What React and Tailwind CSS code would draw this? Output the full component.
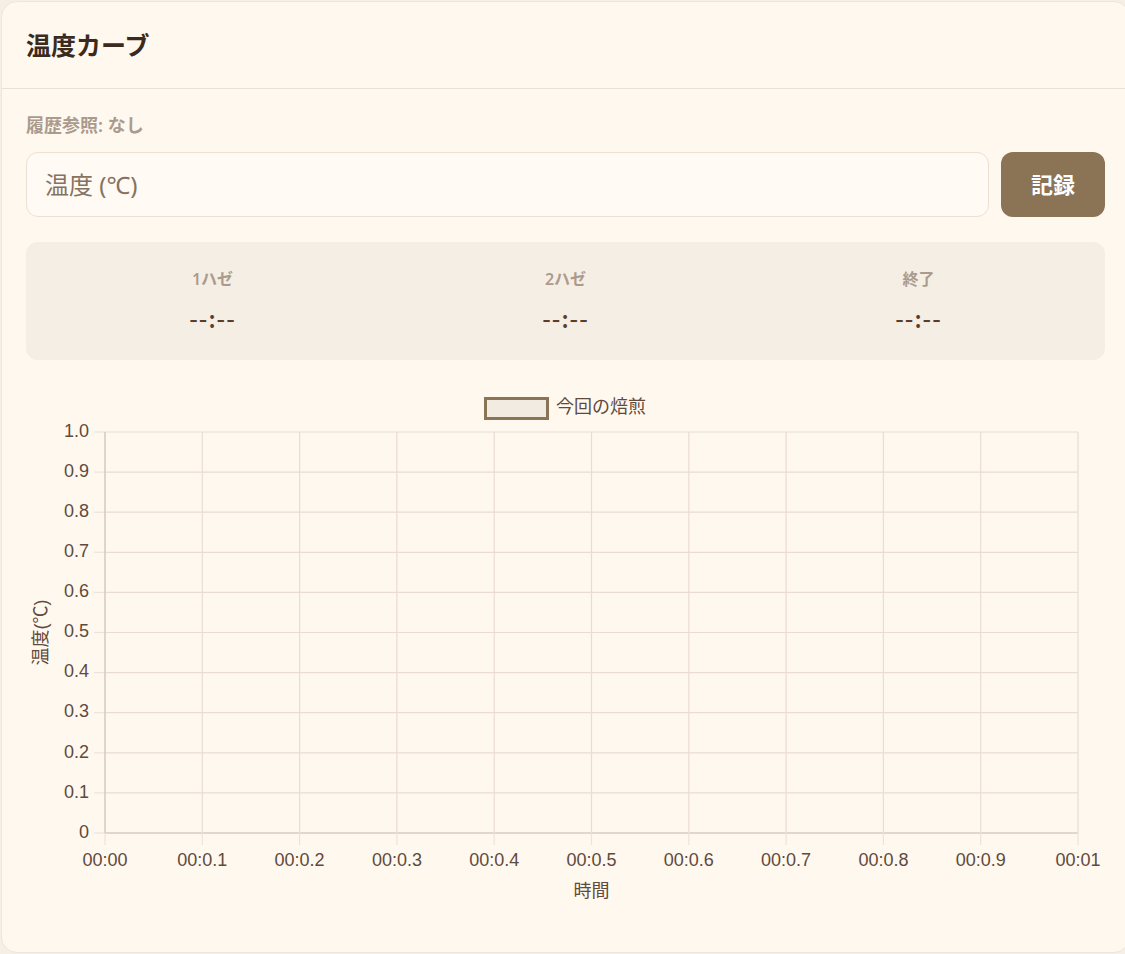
import React from 'react';

const yTicks = ['1.0', '0.9', '0.8', '0.7', '0.6', '0.5', '0.4', '0.3', '0.2', '0.1', '0'];
const xTicks = ['00:00', '00:0.1', '00:0.2', '00:0.3', '00:0.4', '00:0.5', '00:0.6', '00:0.7', '00:0.8', '00:0.9', '00:01'];

const stats = [
    { label: '1ハゼ', value: '--:--' },
    { label: '2ハゼ', value: '--:--' },
    { label: '終了', value: '--:--' },
];

// plot area inside the svg
const L = 79, R = 1052, T = 48, B = 449;

const TempChart = () => {
    const stepY = (B - T) / 10;
    const stepX = (R - L) / 10;
    return (
        <svg width="1079" height="544" className="block" style={{ fontFamily: '"Liberation Sans", "Noto Sans CJK JP", sans-serif' }}>
            {/* legend */}
            <rect x="459.5" y="14.5" width="62" height="20" fill="#f2ebe1" stroke="#8b7355" strokeWidth="3" />
            <text x="530" y="24" fontSize="18" fill="#5f4a3c" dominantBaseline="middle">今回の焙煎</text>

            {/* horizontal grid */}
            {yTicks.map((t, i) => {
                const y = T + i * stepY;
                return (
                    <g key={t}>
                        <line x1="68" x2={L} y1={y} y2={y} stroke="#eee3da" strokeWidth="1.2" />
                        <line x1={L} x2={R} y1={y} y2={y} stroke={i === 10 ? '#d8cbc2' : '#eadcd2'} strokeWidth={i === 10 ? 1.6 : 1.2} />
                        <text x="63" y={y} fontSize="18" fill="#5f4a3c" textAnchor="end" dominantBaseline="middle">{t}</text>
                    </g>
                );
            })}

            {/* vertical grid */}
            {xTicks.map((t, j) => {
                const x = L + j * stepX;
                return (
                    <g key={t}>
                        <line x1={x} x2={x} y1={B} y2="461" stroke="#eee3da" strokeWidth="1.2" />
                        <line x1={x} x2={x} y1={T} y2={B} stroke={j === 0 ? '#d8cbc2' : '#eadcd2'} strokeWidth={j === 0 ? 1.6 : 1.2} />
                        <text x={x} y="477" fontSize="18" fill="#5f4a3c" textAnchor="middle" dominantBaseline="middle">{t}</text>
                    </g>
                );
            })}

            <text x={(L + R) / 2} y="508" fontSize="18" fill="#5f4a3c" textAnchor="middle" dominantBaseline="middle">時間</text>
            <text x="16" y={(T + B) / 2} fontSize="18" fill="#5f4a3c" textAnchor="middle" dominantBaseline="middle" transform={`rotate(-90 16 ${(T + B) / 2})`}>温度(℃)</text>
        </svg>
    );
};

export default function App() {
    return (
        <div className="min-h-screen bg-[#f5efe8] pt-px pl-px overflow-hidden" style={{ fontFamily: '"Noto Sans", "Noto Sans CJK JP", sans-serif' }}>
            <div className="w-[1129px] bg-[#fff8ef] border border-[#efe5da] rounded-2xl">
                <div className="h-[87px] flex items-center px-6 border-b border-[#ebe0d4]">
                    <h2 className="text-[25px] font-bold text-[#3b2a1e] leading-none">温度カーブ</h2>
                </div>

                <div className="px-6 pt-6 pb-6">
                    <div className="text-[18px] font-semibold text-[#ab9b8d] leading-[25px] mb-[14px]">履歴参照: なし</div>

                    <div className="flex gap-3">
                        <input
                            type="text"
                            placeholder="温度 (℃)"
                            className="flex-1 h-[65px] rounded-xl border border-[#ebe0d3] bg-[#fffaf3] px-[18px] text-[24px] text-[#3b2a1e] placeholder:text-[#85725f] outline-none"
                        />
                        <button className="w-[104px] h-[65px] rounded-xl bg-[#8b7355] text-white text-[22px] font-bold">記録</button>
                    </div>

                    <div className="mt-[25px] rounded-xl bg-[#f5eee4] grid grid-cols-3 px-2.5 pt-[25px] pb-6">
                        {stats.map((s) => (
                            <div key={s.label} className="flex flex-col items-center">
                                <span className="text-[16px] font-semibold text-[#ab9b8d] leading-6">{s.label}</span>
                                <span className="mt-[9px] text-[24px] font-medium text-[#5a3e2b] leading-9 tracking-[1px]" style={{ fontFamily: '"Noto Sans CJK JP", sans-serif' }}>{s.value}</span>
                            </div>
                        ))}
                    </div>

                    <div className="mt-6">
                        <TempChart />
                    </div>
                </div>
            </div>
        </div>
    );
}
